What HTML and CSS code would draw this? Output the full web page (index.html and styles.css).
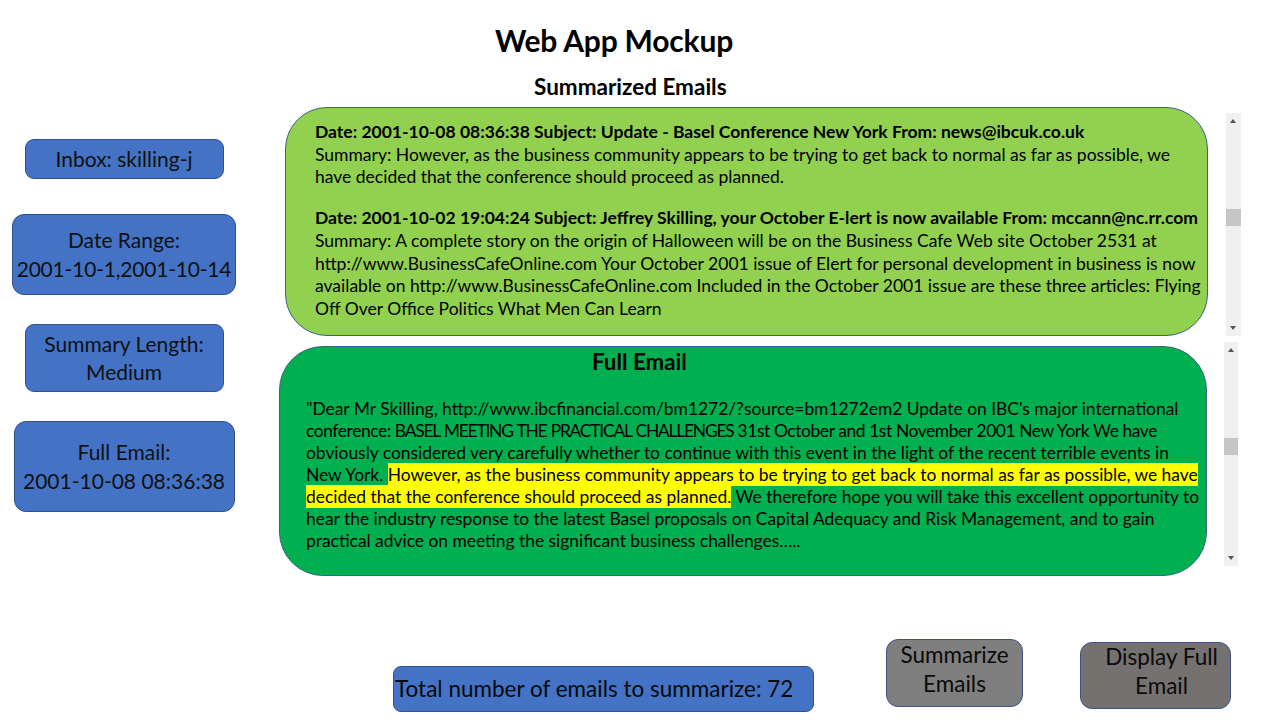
FILE: index.html
```html
<!DOCTYPE html>
<html lang="en">
<head>
<meta charset="utf-8">
<title>Web App Mockup</title>
<link rel="stylesheet" href="styles.css">
</head>
<body>
<div class="page">
  <header class="header">
    <h1 class="title">Web App Mockup</h1>
    <h2 class="subtitle">Summarized Emails</h2>
  </header>

  <div class="content">
    <aside class="sidebar">
      <div class="side-box inbox"><div class="side-text">Inbox: skilling-j</div></div>
      <div class="side-box range"><div class="side-text">Date Range:<br><span class="tight">2001-10-1,2001-10-14</span></div></div>
      <div class="side-box length"><div class="side-text">Summary Length:<br>Medium</div></div>
      <div class="side-box full"><div class="side-text">Full Email:<br>2001-10-08 08:36:38</div></div>
    </aside>

    <main class="main">
      <div class="panel-row row-summary">
        <section class="panel summary-panel">
          <div class="email-item">
            <div class="email-head">Date: 2001-10-08 08:36:38 Subject: Update - Basel Conference New York From: news@ibcuk.co.uk</div>
            <div class="email-sum">Summary: However, as the business community appears to be trying to get back to normal as far as possible, we<br>have decided that the conference should proceed as planned.</div>
          </div>
          <div class="email-item">
            <div class="email-head">Date: 2001-10-02 19:04:24 Subject: Jeffrey Skilling, your October E-lert is now available From: mccann@nc.rr.com</div>
            <div class="email-sum">Summary: A complete story on the origin of Halloween will be on the Business Cafe Web site October 2531 at<br>http://www.BusinessCafeOnline.com Your October 2001 issue of Elert for personal development in business is now<br>available on http://www.BusinessCafeOnline.com Included in the October 2001 issue are these three articles: Flying<br>Off Over Office Politics What Men Can Learn</div>
          </div>
        </section>
        <div class="scrollbar sb-summary">
          <span class="arrow up"></span>
          <span class="thumb"></span>
          <span class="arrow down"></span>
        </div>
      </div>

      <div class="panel-row row-full">
        <section class="panel full-panel">
          <h3 class="full-title">Full Email</h3>
          <div class="full-body">"Dear Mr Skilling, http://www.ibcfinancial.com/bm1272/?source=bm1272em2 Update on IBC's major international<br><span class="narrow">conference: <span class="caps">BASEL MEETING THE PRACTICAL CHALLENGES</span> 31st October and 1st November 2001 New York We have</span><br>obviously considered very carefully whether to continue with this event in the light of the recent terrible events in<br>New York. <mark class="hl">However, as the business community appears to be trying to get back to normal as far as possible, we have</mark><br><mark class="hl">decided that the conference should proceed as planned.</mark> We therefore hope you will take this excellent opportunity to<br>hear the industry response to the latest Basel proposals on Capital Adequacy and Risk Management, and to gain<br>practical advice on meeting the significant business challenges…..</div>
        </section>
        <div class="scrollbar sb-full">
          <span class="arrow up"></span>
          <span class="thumb"></span>
          <span class="arrow down"></span>
        </div>
      </div>
    </main>
  </div>

  <footer class="footer">
    <div class="total-box"><span class="total-text">Total number of emails to summarize: 72</span></div>
    <div class="btn btn-summarize"><span class="btn-text">Summarize<br>Emails</span></div>
    <div class="btn btn-display"><span class="btn-text">Display Full<br>Email</span></div>
  </footer>
</div>
</body>
</html>
```

FILE: styles.css
```css
* { box-sizing: border-box; }

html, body {
  margin: 0;
  padding: 0;
  background: #ffffff;
}

body {
  font-family: Lato, "Open Sans", "Liberation Sans", sans-serif;
  color: #000;
}

.page {
  width: 1280px;
  height: 720px;
  overflow: hidden;
}

/* Header */
.header {
  padding-top: 22px;
}

.title {
  margin: 0 0 0 495px;
  font-size: 30px;
  line-height: 36px;
  font-weight: 700;
  letter-spacing: -0.2px;
}

.subtitle {
  margin: 16px 0 0 534px;
  font-size: 22.5px;
  line-height: 26px;
  font-weight: 700;
}

/* Content row */
.content {
  display: flex;
  margin-top: 7px;
  height: 470px;
}

.sidebar {
  width: 248px;
  flex: none;
  display: flex;
  flex-direction: column;
  align-items: center;
  padding-top: 32px;
}

.side-box {
  background: #4472c4;
  border: 1.5px solid #2f528f;
  color: #111;
  display: flex;
  align-items: center;
  justify-content: center;
  border-radius: 9px;
}

.side-text {
  font-size: 21px;
  line-height: 28.5px;
  text-align: center;
  white-space: nowrap;
}

.tight {
  letter-spacing: -0.2px;
}

.inbox { width: 199px; height: 40px; }
.range { width: 224px; height: 81px; margin-top: 35px; border-radius: 12px; }
.length { width: 199px; height: 68px; margin-top: 29px; }
.full { width: 221px; height: 91px; margin-top: 29px; border-radius: 12px; }

.main {
  margin-left: 31px;
  display: flex;
  flex-direction: column;
}

.panel-row {
  display: flex;
  align-items: flex-start;
}

.panel {
  border: 1.5px solid #3a6187;
}

.summary-panel {
  margin-left: 6px;
  width: 923px;
  height: 229px;
  background: #92d050;
  border-radius: 42px;
  padding: 13px 0 0 29px;
  font-size: 17.5px;
  line-height: 22.7px;
  white-space: nowrap;
}

.email-item + .email-item {
  margin-top: 18px;
}

.email-head {
  font-weight: 700;
}

.row-full {
  margin-top: 6px;
}

.full-panel {
  margin-top: 4px;
  width: 928px;
  height: 230px;
  background: #00b050;
  border-radius: 44px;
  padding: 1px 0 0 26px;
  white-space: nowrap;
}

.full-title {
  margin: 0 0 0 286px;
  font-size: 22.3px;
  line-height: 28px;
  font-weight: 700;
}

.full-body {
  margin-top: 22px;
  font-size: 17.4px;
  line-height: 22px;
}

.narrow {
  letter-spacing: -0.4px;
}

.caps {
  letter-spacing: -1.2px;
  word-spacing: 1px;
}

.hl {
  background: #ffff00;
  color: #000;
  padding: 1px 0 1px;
}

/* Scrollbars */
.scrollbar {
  background: #f0f0f0;
  position: relative;
  flex: none;
}

.sb-summary {
  margin-left: 18px;
  margin-top: 6px;
  width: 15px;
  height: 223px;
}

.sb-full {
  margin-left: 17px;
  width: 14px;
  height: 224px;
}

.arrow {
  position: absolute;
  left: 50%;
  margin-left: -3.5px;
  width: 0;
  height: 0;
  border-left: 3.5px solid transparent;
  border-right: 3.5px solid transparent;
}

.arrow.up {
  top: 6px;
  border-bottom: 4px solid #555;
}

.arrow.down {
  bottom: 6px;
  border-top: 4px solid #555;
}

.thumb {
  position: absolute;
  left: 0;
  right: 0;
  background: #c6c6c6;
  height: 17px;
}

.sb-summary .thumb { top: 96px; }
.sb-full .thumb { top: 96px; }

/* Footer */
.footer {
  display: flex;
  align-items: flex-start;
  margin-top: 62px;
  padding-left: 393px;
}

.total-box {
  margin-top: 27px;
  width: 421px;
  height: 46px;
  background: #4472c4;
  border: 1.5px solid #2f528f;
  border-radius: 8px;
  display: flex;
  align-items: center;
  overflow: hidden;
  color: #0a0a0a;
}

.total-text {
  font-size: 22.5px;
  line-height: 28px;
  white-space: nowrap;
  padding-left: 1px;
}

.btn {
  display: flex;
  align-items: center;
  justify-content: center;
  text-align: center;
  border: 1.5px solid #3b5485;
  color: #0a0a0a;
}

.btn-text {
  font-size: 22.5px;
  line-height: 29px;
  white-space: nowrap;
}

.btn-summarize {
  margin-left: 72px;
  width: 137px;
  height: 68px;
  background: #7f7f7f;
  border-radius: 12px;
  padding-bottom: 8px;
}

.btn-display {
  margin-left: 57px;
  margin-top: 3px;
  width: 151px;
  height: 67px;
  background: #767171;
  border-radius: 12px;
  padding-left: 12px;
  padding-bottom: 9px;
}
```
